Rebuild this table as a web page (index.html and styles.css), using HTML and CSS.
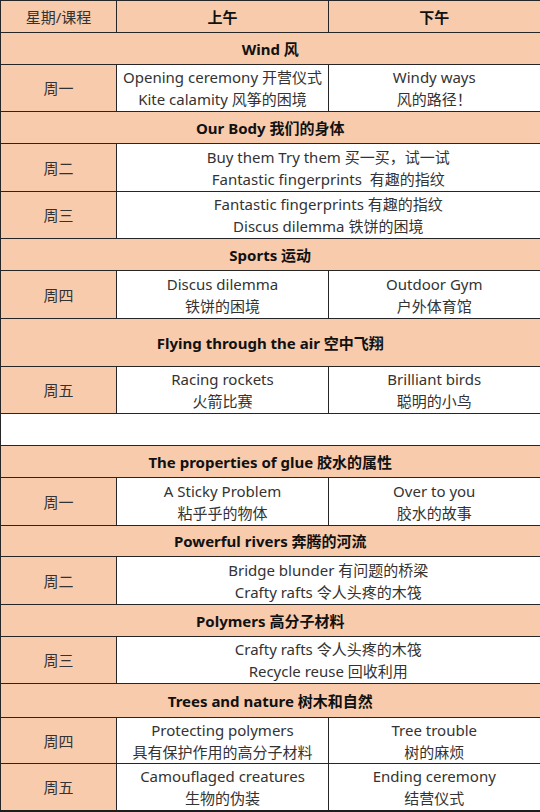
FILE: index.html
```html
<!DOCTYPE html>
<html lang="zh">
<head>
<meta charset="utf-8">
<link rel="stylesheet" href="styles.css">
</head>
<body>
<table class="sched">
  <colgroup><col class="c-day"><col class="c-am"><col class="c-pm"></colgroup>
  <tr class="r32 peach"><td>星期/课程</td><td class="b">上午</td><td class="b">下午</td></tr>
  <tr class="r32 peach"><td colspan="3" class="b">Wind 风</td></tr>
  <tr class="r47"><td class="peach">周一</td><td>Opening ceremony 开营仪式<br>Kite calamity 风筝的困境</td><td>Windy ways<br>风的路径！</td></tr>
  <tr class="r32 peach"><td colspan="3" class="b">Our Body 我们的身体</td></tr>
  <tr class="r48"><td class="peach">周二</td><td colspan="2">Buy them Try them 买一买，试一试<br>Fantastic fingerprints&nbsp; 有趣的指纹</td></tr>
  <tr class="r47"><td class="peach">周三</td><td colspan="2">Fantastic fingerprints 有趣的指纹<br>Discus dilemma 铁饼的困境</td></tr>
  <tr class="r32 peach"><td colspan="3" class="b">Sports 运动</td></tr>
  <tr class="r48"><td class="peach">周四</td><td>Discus dilemma<br>铁饼的困境</td><td>Outdoor Gym<br>户外体育馆</td></tr>
  <tr class="r48 peach"><td colspan="3" class="b">Flying through the air 空中飞翔</td></tr>
  <tr class="r47"><td class="peach">周五</td><td>Racing rockets<br>火箭比赛</td><td>Brilliant birds<br>聪明的小鸟</td></tr>
  <tr class="r32 blank"><td colspan="3"></td></tr>
  <tr class="r32 peach"><td colspan="3" class="b">The properties of glue 胶水的属性</td></tr>
  <tr class="r48"><td class="peach">周一</td><td>A Sticky Problem<br>粘乎乎的物体</td><td>Over to you<br>胶水的故事</td></tr>
  <tr class="r31 peach"><td colspan="3" class="b">Powerful rivers 奔腾的河流</td></tr>
  <tr class="r48"><td class="peach">周二</td><td colspan="2">Bridge blunder 有问题的桥梁<br>Crafty rafts 令人头疼的木筏</td></tr>
  <tr class="r32 peach"><td colspan="3" class="b">Polymers 高分子材料</td></tr>
  <tr class="r47"><td class="peach">周三</td><td colspan="2">Crafty rafts 令人头疼的木筏<br>Recycle reuse 回收利用</td></tr>
  <tr class="r34 peach"><td colspan="3" class="b">Trees and nature 树木和自然</td></tr>
  <tr class="r46"><td class="peach">周四</td><td>Protecting polymers<br>具有保护作用的高分子材料</td><td>Tree trouble<br>树的麻烦</td></tr>
  <tr class="r47"><td class="peach">周五</td><td>Camouflaged creatures<br>生物的伪装</td><td>Ending ceremony<br>结营仪式</td></tr>
</table>
</body>
</html>
```

FILE: styles.css
```css
html, body {
  margin: 0;
  padding: 0;
  background: #ffffff;
}
.sched {
  width: 540px;
  table-layout: fixed;
  border-collapse: collapse;
  font-family: "Noto Sans", "Noto Sans CJK SC", sans-serif;
  font-size: 15px;
  line-height: 22px;
  color: #333333;
}
.c-day { width: 116px; }
.c-am { width: 212px; }
.c-pm { width: 212px; }
.sched td {
  border: 1px solid #262626;
  text-align: center;
  vertical-align: middle;
  padding: 0;
  white-space: nowrap;
}
.sched tr td:last-child { border-right: 2px solid #1e1e1e; }
.sched tr:last-child td { border-bottom: 2px solid #1e1e1e; }
.peach td, td.peach { background: #f8cbad; }
.blank td { background: #ffffff; }
.b { font-weight: bold; color: #111111; }
.r31 td { height: 30px; }
.r32 td { height: 31px; }
.r34 td { height: 33px; }
.r46 td { height: 45px; }
.r47 td { height: 46px; }
.r48 td { height: 47px; }
```
